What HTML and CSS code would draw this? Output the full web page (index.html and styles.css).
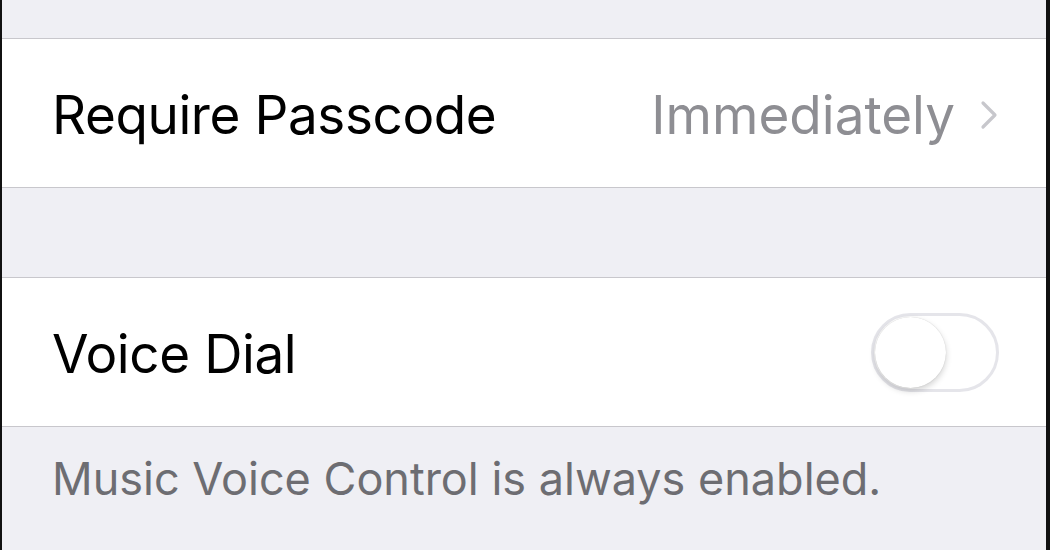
FILE: index.html
```html
<!DOCTYPE html>
<html>
<head>
<meta charset="utf-8">
<link rel="stylesheet" href="styles.css">
</head>
<body>
<div class="frame">
  <div class="spacer top"></div>
  <div class="group">
    <div class="row">
      <span class="label">Require Passcode</span>
      <span class="value">Immediately</span>
      <svg class="chevron" width="20" height="30" viewBox="0 0 20 30"><path d="M4 3 L16 15 L4 27" fill="none" stroke="#c7c7cc" stroke-width="3.2" stroke-linecap="round" stroke-linejoin="round"/></svg>
    </div>
  </div>
  <div class="spacer mid"></div>
  <div class="group">
    <div class="row">
      <span class="label">Voice Dial</span>
      <span class="toggle"><span class="knob"></span></span>
    </div>
  </div>
  <div class="footer">Music Voice Control is always enabled.</div>
</div>
</body>
</html>
```
FILE: styles.css
```css
html, body {
  margin: 0;
  padding: 0;
  background: #efeff4;
}
.frame {
  height: 550px;
  box-sizing: border-box;
  border-left: 2px solid #111;
  border-right: 4px solid #111;
  background: #efeff4;
  font-family: Inter, "Noto Sans", sans-serif;
  overflow: hidden;
}
.spacer.top { height: 38px; }
.spacer.mid { height: 89px; }
.group {
  background: #fff;
  border-top: 1px solid #c8c7cc;
  border-bottom: 1px solid #c8c7cc;
}
.row {
  height: 148px;
  display: flex;
  align-items: center;
  padding: 4px 47px 0 50px;
  box-sizing: border-box;
}
.label {
  font-size: 53px;
  color: #000;
  flex: 1;
  letter-spacing: -0.4px;
}
.value {
  font-size: 53px;
  color: #8e8e93;
  letter-spacing: 0;
}
.chevron {
  margin-left: 24px;
}
.toggle {
  width: 122px;
  height: 73px;
  border: 3px solid #e5e5ea;
  border-radius: 40px;
  position: relative;
  background: #fff;
  margin-top: -4px;
}
.knob {
  position: absolute;
  left: 1px;
  top: 1px;
  width: 71px;
  height: 71px;
  border-radius: 50%;
  background: #fff;
  box-shadow: 0 3px 6px rgba(0,0,0,0.18), 0 0 1px rgba(0,0,0,0.2);
}
.footer {
  padding: 24px 0 0 50px;
  font-size: 45px;
  color: #6d6d72;
}
```
